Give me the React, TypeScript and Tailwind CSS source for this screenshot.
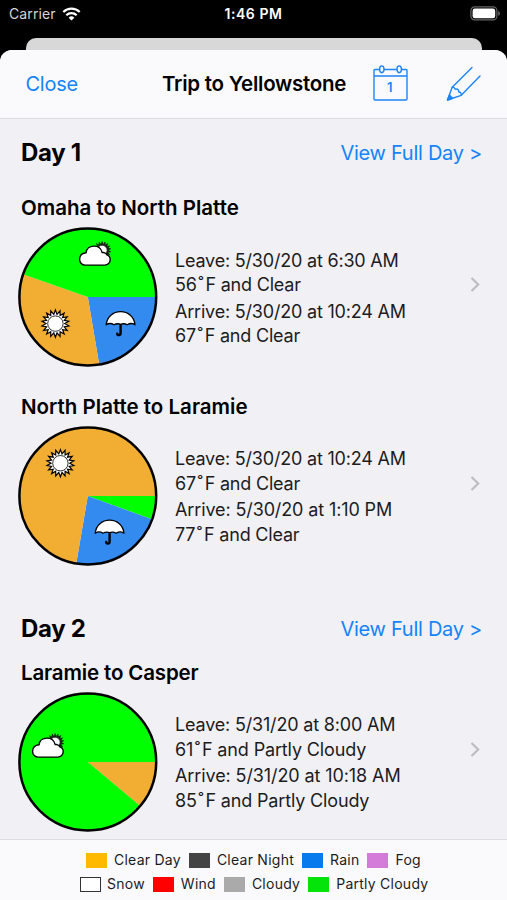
import { Fragment, type ReactNode } from 'react';

type Weather = 'clear' | 'rain' | 'partly';

type Slice = {
  weather: Weather;
  from: number;
  to: number;
  // icon centre inside the 140x140 chart, left out for thin slices
  icon?: [number, number];
};

type Leg = {
  title: string;
  titleTracking: string;
  slices: Slice[];
  lines: { text: string; tracking: string }[];
};

const SLICE_COLOR: Record<Weather, string> = {
  clear: '#f2ad33',
  rain: '#338aef',
  partly: '#00ff00',
};

const OMAHA: Leg = {
  title: 'Omaha to North Platte',
  titleTracking: 'tracking-[0px]',
  slices: [
    { weather: 'rain', from: 0, to: 80.4, icon: [102.8, 96.6] },
    { weather: 'clear', from: 80.4, to: 199.3, icon: [37.6, 96.6] },
    { weather: 'partly', from: 199.3, to: 360, icon: [77, 26.8] },
  ],
  lines: [
    { text: 'Leave: 5/30/20 at 6:30 AM', tracking: 'tracking-[-0.2px]' },
    { text: '56˚F and Clear', tracking: 'tracking-[-0.2px]' },
    { text: 'Arrive: 5/30/20 at 10:24 AM', tracking: 'tracking-[-0.2px]' },
    { text: '67˚F and Clear', tracking: 'tracking-[-0.2px]' },
  ],
};

const PLATTE: Leg = {
  title: 'North Platte to Laramie',
  titleTracking: 'tracking-[0px]',
  slices: [
    { weather: 'partly', from: 0, to: 20 },
    { weather: 'rain', from: 20, to: 99.7, icon: [91.8, 106] },
    { weather: 'clear', from: 99.7, to: 360, icon: [42.6, 37.2] },
  ],
  lines: [
    { text: 'Leave: 5/30/20 at 10:24 AM', tracking: 'tracking-[-0.2px]' },
    { text: '67˚F and Clear', tracking: 'tracking-[-0.2px]' },
    { text: 'Arrive: 5/30/20 at 1:10 PM', tracking: 'tracking-[-0.12px]' },
    { text: '77˚F and Clear', tracking: 'tracking-[-0.2px]' },
  ],
};

const LARAMIE: Leg = {
  title: 'Laramie to Casper',
  titleTracking: 'tracking-[-0.15px]',
  slices: [
    { weather: 'clear', from: 0, to: 40 },
    { weather: 'partly', from: 40, to: 360, icon: [30, 53.8] },
  ],
  lines: [
    { text: 'Leave: 5/31/20 at 8:00 AM', tracking: 'tracking-[-0.18px]' },
    { text: '61˚F and Partly Cloudy', tracking: 'tracking-[-0.14px]' },
    { text: 'Arrive: 5/31/20 at 10:18 AM', tracking: 'tracking-[-0.1px]' },
    { text: '85˚F and Partly Cloudy', tracking: 'tracking-[-0.16px]' },
  ],
};

function slicePath(from: number, to: number) {
  const point = (deg: number) => {
    const a = (deg * Math.PI) / 180;
    return `${(70 + 68 * Math.cos(a)).toFixed(2)} ${(70 + 68 * Math.sin(a)).toFixed(2)}`;
  };
  return `M70 70 L${point(from)} A68 68 0 ${to - from > 180 ? 1 : 0} 1 ${point(to)} Z`;
}

function burst(cx: number, cy: number, outer: number, inner: number, rays: number) {
  const pts: string[] = [];
  for (let i = 0; i < rays * 2; i++) {
    const r = i % 2 === 0 ? outer : inner;
    const a = (i * Math.PI) / rays - Math.PI / 2;
    pts.push(`${(cx + r * Math.cos(a)).toFixed(2)},${(cy + r * Math.sin(a)).toFixed(2)}`);
  }
  return pts.join(' ');
}

function SunGlyph() {
  return (
    <g stroke="#000" strokeLinejoin="miter">
      <polygon points={burst(0, 0, 13.6, 9.4, 18)} fill="#fff" strokeWidth="1.2" />
      <circle r="7.7" fill="#fff" strokeWidth="0.8" />
    </g>
  );
}

function UmbrellaGlyph() {
  return (
    <g stroke="#000" strokeLinecap="round" strokeLinejoin="round">
      <path d="M0 2 V9.4 Q0 11.5 -1.8 11.5 Q-3.3 11.5 -3.4 10" fill="none" strokeWidth="2.4" />
      <path
        d="M-14.4 1.2 C-13.6 -6.8 -7.5 -11.9 0 -11.9 S13.6 -6.8 14.4 1.2 C12 -0.4 8.8 -0.2 6.6 1.2 C4.2 -0.2 2 -0.1 0 0.7 C-2 -0.1 -4.2 -0.2 -6.6 1.2 C-8.8 -0.2 -12 -0.4 -14.4 1.2 Z"
        fill="#fff"
        strokeWidth="1.3"
      />
    </g>
  );
}

function CloudGlyph() {
  return (
    <g stroke="#000" strokeLinejoin="round">
      <polygon points={burst(7.3, -3.5, 8.8, 6, 18)} fill="#222" strokeWidth="0.5" />
      <circle cx="7.3" cy="-3.5" r="5" fill="#fff" strokeWidth="0.6" />
      <path
        d="M-9.6 11.3 A5.6 5.6 0 0 1 -15.2 5.6 C-15.2 2.2 -12.8 -0.6 -8.7 -1 C-8.4 -5.2 -5 -7.7 -0.8 -7.7 C3.3 -7.7 6.4 -5.4 7.4 -1.2 C9.4 -1.6 11.5 -0.4 12 1.1 C14.2 1.7 15.4 3.6 15.4 5.9 A5.4 5.4 0 0 1 10 11.3 Z"
        fill="#fff"
        strokeWidth="1.4"
      />
    </g>
  );
}

const GLYPH: Record<Weather, () => ReactNode> = {
  clear: SunGlyph,
  rain: UmbrellaGlyph,
  partly: CloudGlyph,
};

function WeatherPie({ slices }: { slices: Slice[] }) {
  return (
    <svg width="140" height="140" viewBox="0.2 0 140 140" className="shrink-0">
      {slices.map((s) => (
        <path key={s.from} d={slicePath(s.from, s.to)} fill={SLICE_COLOR[s.weather]} />
      ))}
      <circle cx="70" cy="70" r="68.4" fill="none" stroke="#000" strokeWidth="2.5" />
      {slices.map((s) => {
        if (!s.icon) return null;
        const Glyph = GLYPH[s.weather];
        return (
          <g key={s.from} transform={`translate(${s.icon[0]} ${s.icon[1]})`}>
            <Glyph />
          </g>
        );
      })}
    </svg>
  );
}

function LineText({ text }: { text: string }) {
  const parts = text.split('˚');
  return (
    <>
      {parts.map((part, i) => (
        <Fragment key={i}>
          {i > 0 && <span className="pr-[2px] pl-[1.5px]">˚</span>}
          {part}
        </Fragment>
      ))}
    </>
  );
}

function TripLeg({ leg }: { leg: Leg }) {
  return (
    <section>
      <h3 className="pl-[21px] text-[20.5px] leading-6 font-semibold">
        <span className={leg.titleTracking}>{leg.title}</span>
      </h3>
      <div className="mt-[7px] flex items-center pl-[18px] pr-[27px]">
        <WeatherPie slices={leg.slices} />
        <div className="ml-[17px] flex-1 pt-[3px] text-[18px] whitespace-nowrap text-[#1c1c1e]">
          {leg.lines.map((line, i) => (
            <p key={i} className={i === 2 ? 'mt-[2px] leading-[24.5px]' : 'leading-[24.5px]'}>
              <span className={line.tracking}>
                <LineText text={line.text} />
              </span>
            </p>
          ))}
        </div>
        <svg width="10" height="16" viewBox="0 0 10 16" className="-translate-y-[12.5px]">
          <path d="M1.5 1.5 L8.2 8 L1.5 14.5" fill="none" stroke="#bdbdc1" strokeWidth="2.2" />
        </svg>
      </div>
    </section>
  );
}

function DayHeader({ label }: { label: string }) {
  return (
    <div className="flex h-[66px] items-center justify-between pt-[2px] pl-[21px] pr-[25px]">
      <h2 className="text-[24px] font-bold tracking-[-0.3px]">{label}</h2>
      <span className="text-[20px] tracking-[-0.27px] text-[#1484fb]">View Full Day &gt;</span>
    </div>
  );
}

function LegendItem({ label, swatch, gap }: { label: string; swatch: string; gap: string }) {
  return (
    <div className={`flex items-center ${gap}`}>
      <span className={`h-[15px] w-[21px] ${swatch}`} />
      <span>{label}</span>
    </div>
  );
}

function CalendarIcon() {
  return (
    <svg
      width="36"
      height="37"
      viewBox="0 0 36 37"
      fill="none"
      stroke="#1d84f5"
      strokeWidth="1.4"
      className="mb-[2px]"
    >
      <path d="M6.5 4.5H2Q1 4.5 1 5.5V34Q1 35 2 35H33Q34 35 34 34V5.5Q34 4.5 33 4.5H28.5M11 4.5H24M1 11H34" />
      <ellipse cx="8.8" cy="4.3" rx="2.2" ry="3.4" />
      <ellipse cx="26.2" cy="4.3" rx="2.2" ry="3.4" />
      <text
        x="16.8"
        y="26.7"
        fill="#1d84f5"
        stroke="none"
        textAnchor="middle"
        fontSize="13"
        fontWeight="600"
      >
        1
      </text>
    </svg>
  );
}

function PencilIcon() {
  return (
    <svg
      width="36"
      height="36"
      viewBox="0 0 36 36"
      fill="none"
      stroke="#1d84f5"
      strokeWidth="1.4"
      strokeLinejoin="round"
      strokeLinecap="round"
      className="mb-[1px]"
    >
      <path d="M26 1.5 L6.2 21.2 L1.5 34 L15.2 29.3 L34 10" />
      <path d="M6.2 21.2 Q8.5 20.8 9.1 23.2 Q12.7 22.2 12.8 26 Q15.5 26.2 15.2 29.3" />
      <path d="M3.4 29 L1.5 34 L6.6 32.3 Z" fill="#1d84f5" />
    </svg>
  );
}

export default function App() {
  return (
    <div className="flex h-[900px] w-[507px] flex-col overflow-hidden bg-black font-['Inter','Liberation_Sans',sans-serif] text-black">
      <div className="grid h-[38px] shrink-0 grid-cols-3 items-center pb-[11px] text-[14px] text-white">
        <div className="flex items-center gap-[6px] pl-[9px] tracking-[0.1px] text-[#d5d5d5]">
          <span>Carrier</span>
          <svg width="19" height="14" viewBox="0 0 18 14" fill="none" stroke="#fff" strokeWidth="2.2">
            <path d="M0.8 5 A11.8 11.8 0 0 1 17.2 5" />
            <path d="M3.8 8.2 A7.4 7.4 0 0 1 14.2 8.2" />
            <path d="M9 13.6 L6.1 10.7 A4.2 4.2 0 0 1 11.9 10.7 Z" fill="#fff" stroke="none" />
          </svg>
        </div>
        <span className="text-center font-semibold tracking-[0.55px] whitespace-nowrap">1:46 PM</span>
        <div className="flex justify-end pr-[6px]">
          <svg width="31" height="15" viewBox="0 0 31 15">
            <rect x="0.9" y="0.9" width="26" height="13" rx="3.8" fill="none" stroke="#666" strokeWidth="1.2" />
            <rect x="2.6" y="2.6" width="22.6" height="9.6" rx="2.3" fill="#fff" />
            <path d="M28.2 5 Q30 5.6 30 7.4 T28.2 9.8 Z" fill="#666" />
          </svg>
        </div>
      </div>

      <div className="mr-[25px] ml-[26px] h-3 shrink-0 rounded-t-[10px] bg-[#d8d8d8]" />

      <div className="flex min-h-0 flex-1 flex-col overflow-hidden rounded-t-[12px] bg-[#f1f0f5]">
        <header className="flex h-[69px] shrink-0 items-center border-b border-[#dcdbe0] bg-[#fafafd] pl-[25.5px] pr-[25px]">
          <span className="w-[136.5px] text-[20px] tracking-[-0.25px] text-[#1484fb]">Close</span>
          <h1 className="w-[211px] text-[20.5px] font-semibold tracking-[-0.25px] whitespace-nowrap">
            Trip to Yellowstone
          </h1>
          <CalendarIcon />
          <span className="ml-auto">
            <PencilIcon />
          </span>
        </header>

        <main className="min-h-0 flex-1 overflow-hidden">
          <DayHeader label="Day 1" />
          <div className="mt-[11px] flex flex-col gap-[27.5px]">
            <TripLeg leg={OMAHA} />
            <TripLeg leg={PLATTE} />
          </div>
          <div className="mt-[29px]">
            <DayHeader label="Day 2" />
            <TripLeg leg={LARAMIE} />
          </div>
        </main>

        <footer className="h-[61px] shrink-0 border-t border-[#dcdbe0] bg-[#fafafd] pt-[10px] text-[14px] leading-[20px] tracking-[0.25px] whitespace-nowrap text-[#1c1c1e]">
          <div className="flex gap-2 pl-[86px]">
            <LegendItem label="Clear Day" swatch="bg-[#ffb900]" gap="gap-[7px]" />
            <LegendItem label="Clear Night" swatch="bg-[#444444]" gap="gap-[7px]" />
            <LegendItem label="Rain" swatch="bg-[#077bee]" gap="gap-[7px]" />
            <LegendItem label="Fog" swatch="bg-[#d47bd9]" gap="gap-[7px]" />
          </div>
          <div className="mt-[4px] flex gap-2 pl-[80px]">
            <LegendItem label="Snow" swatch="border-[1.5px] border-[#333] bg-white" gap="gap-[6px]" />
            <LegendItem label="Wind" swatch="bg-[#ff0000]" gap="gap-[7px]" />
            <LegendItem label="Cloudy" swatch="bg-[#aaaaaa]" gap="gap-[7px]" />
            <LegendItem label="Partly Cloudy" swatch="bg-[#04e40b]" gap="gap-[7px]" />
          </div>
        </footer>
      </div>
    </div>
  );
}
